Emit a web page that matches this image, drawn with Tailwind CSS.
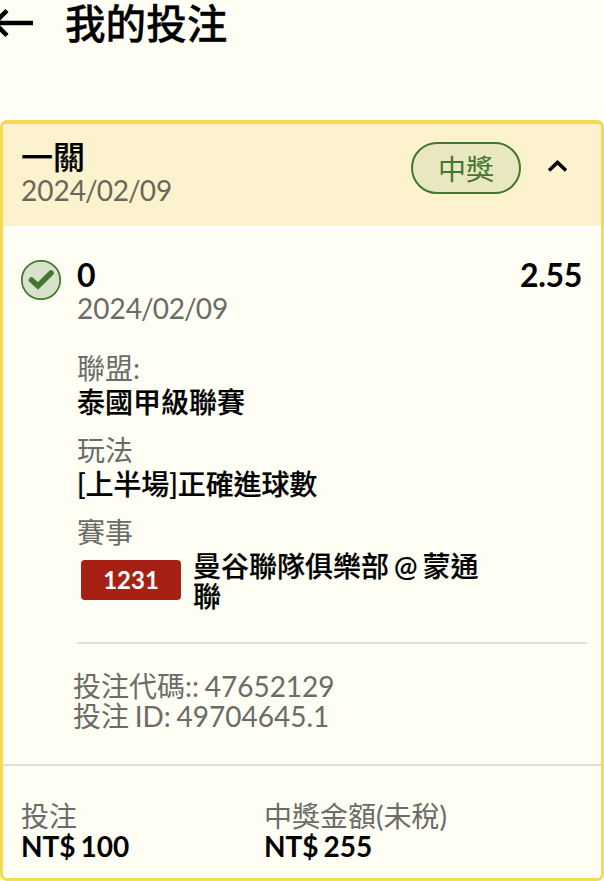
<!DOCTYPE html>
<html lang="zh-Hant">
<head>
  <meta charset="UTF-8">
  <meta name="viewport" content="width=device-width, initial-scale=1.0">
  <title>我的投注</title>
  <script src="https://cdn.jsdelivr.net/npm/@tailwindcss/browser@4"></script>
</head>
<body class="h-[881px] overflow-hidden bg-[#fefef5] font-['Lato','Noto_Sans_CJK_TC',sans-serif] text-[28px] leading-[30px] text-black [word-spacing:-2px]">

  <!-- Page header -->
  <header class="flex h-[113px] items-start">
    <svg class="mt-2 h-[30px] w-[34px] shrink-0" viewBox="0 0 34 30" fill="none" stroke="currentColor" stroke-width="4.500">
      <path d="M33 15H-4M7 2.500L-5.500 15L7 27.500"/>
    </svg>
    <h1 class="ml-[31px] text-[40.600px] leading-[47px] font-medium [-webkit-text-stroke:0.3px]">我的投注</h1>
  </header>
  <div class="h-[7px] bg-white"></div>

  <!-- Bet card -->
  <main class="flex h-[761px] flex-col overflow-hidden rounded-[7px] border-[3px] border-t-4 border-[#f7d953]">
    <div class="flex h-[102px] shrink-0 items-start bg-[#fdf2ce] pr-[34px] pl-[18px]">
      <div class="pt-4">
        <h2 class="text-[32px] leading-[34px] font-medium [-webkit-text-stroke:0.2px]">一關</h2>
        <p class="leading-[32px] text-[#6b675a]">2024<span class="-mx-px">/</span>02<span class="-mx-px">/</span>09</p>
      </div>
      <span class="mt-[18px] ml-auto flex h-[52px] w-[110px] items-center justify-center rounded-full border-2 border-[#43762f] bg-[#e8e7c0] pt-px text-[#43762f]">中獎</span>
      <svg class="mt-9 ml-[26px] h-3 w-5" viewBox="0 0 20 12" fill="none" stroke="currentColor" stroke-width="3.500">
        <path d="M2 10.500L10.500 2.500L19 10.500"/>
      </svg>
    </div>
    <div class="h-1 shrink-0 bg-[#fffffb]"></div>

    <!-- Selection -->
    <section class="flex h-[412px] shrink-0 pt-[30px] pl-[18px]">
      <svg class="h-10 w-10 shrink-0" viewBox="0 0 40 40" fill="none" stroke="#43762f">
        <circle cx="20" cy="20" r="19.200" fill="#d9e1cd" stroke-width="1.700"/>
        <path d="M10.500 20L17 26L30 13" stroke-width="5.500" stroke-linecap="round"/>
      </svg>
      <div class="ml-4 flex-1">
        <div class="flex justify-between pr-[19px] text-[32px] leading-[29px] font-bold">
          <span>0</span>
          <span class="-tracking-[0.3px]">2.55</span>
        </div>
        <p class="leading-[38px] text-[#6b6b68]">2024<span class="-mx-px">/</span>02<span class="-mx-px">/</span>09</p>

        <dl class="mt-6 leading-[34px]">
          <dt class="text-[#6b6b68]">聯盟:</dt>
          <dd class="mb-3.5 font-medium [-webkit-text-stroke:0.2px]">泰國甲級聯賽</dd>
          <dt class="text-[#6b6b68]">玩法</dt>
          <dd class="mb-3.5 -tracking-[0.1px] font-medium [-webkit-text-stroke:0.2px]">[上半場]正確進球數</dd>
          <dt class="text-[#6b6b68]">賽事</dt>
          <dd class="flex items-center gap-3 pl-1 font-medium">
            <span class="flex h-10 w-[100px] shrink-0 items-center justify-center rounded-[4px] bg-[#a72016] text-2xl font-bold text-white">1231</span>
            <span class="w-[300px] pt-0.5 leading-[30px] [-webkit-text-stroke:0.2px]">曼谷聯隊俱樂部 @ 蒙通聯</span>
          </dd>
        </dl>
      </div>
    </section>

    <!-- Bet codes -->
    <div class="mr-3.5 ml-[74px] h-[2px] shrink-0 bg-[#e0e0d8]"></div>
    <section class="h-[120px] shrink-0 pt-[27px] pl-[70px] text-[#6b6b68] [word-spacing:-1.500px]">
      <p>投注代碼:: 47652129</p>
      <p>投注 ID: 49704645.1</p>
    </section>

    <!-- Totals -->
    <section class="flex flex-1 border-t-2 border-[#e0e0d8] pt-[35px] pl-[18px]">
      <div class="w-[243px]">
        <p class="text-[#6b6b68]">投注</p>
        <p class="font-bold">NT$ 100</p>
      </div>
      <div>
        <p class="text-[#6b6b68]">中獎金額(未稅)</p>
        <p class="font-bold">NT$ 255</p>
      </div>
    </section>
  </main>

</body>
</html>
